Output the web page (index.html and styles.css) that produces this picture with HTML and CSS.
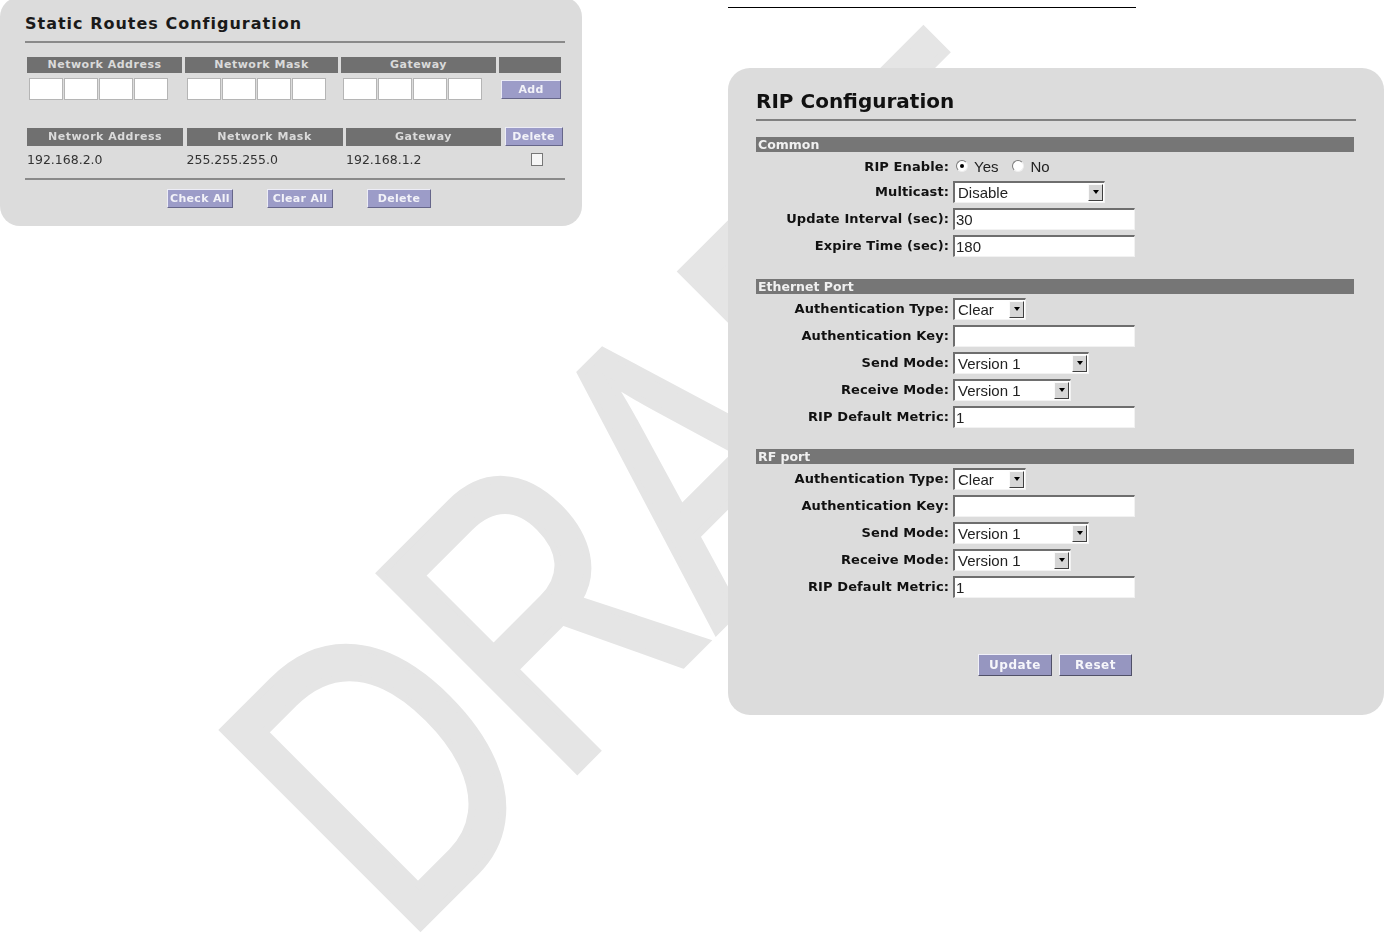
FILE: index.html
```html
<!doctype html>
<html lang="en">
  <head>
    <meta charset="UTF-8" />
    <title>Routing Configuration</title>
    <link rel="stylesheet" href="styles.css">
  </head>
  <body>
    <svg class="watermark" width="1384" height="941" viewBox="0 0 1384 941" aria-hidden="true">
      <text x="0" y="0" transform="translate(402 945) rotate(-45) scale(0.76 1)">DRAFT</text>
    </svg>

    <div class="page">
      <section class="panel routes">
        <h2 class="routes-title">Static Routes Configuration</h2>
        <div class="routes-rule"></div>

        <div class="route-head add-cols">
          <div class="head-cell">Network Address</div>
          <div class="head-cell">Network Mask</div>
          <div class="head-cell">Gateway</div>
          <div class="head-cell"></div>
        </div>
        <div class="route-inputs add-cols">
          <div class="octets">
            <input class="octet" type="text"><input class="octet" type="text"><input class="octet" type="text"><input class="octet" type="text">
          </div>
          <div class="octets">
            <input class="octet" type="text"><input class="octet" type="text"><input class="octet" type="text"><input class="octet" type="text">
          </div>
          <div class="octets">
            <input class="octet" type="text"><input class="octet" type="text"><input class="octet" type="text"><input class="octet" type="text">
          </div>
          <div class="octets">
            <button class="btn-small add-btn">Add</button>
          </div>
        </div>

        <div class="route-head list-cols">
          <div class="head-cell">Network Address</div>
          <div class="head-cell">Network Mask</div>
          <div class="head-cell">Gateway</div>
          <button class="btn-small head-btn">Delete</button>
        </div>
        <div class="route-row list-cols">
          <span>192.168.2.0</span>
          <span>255.255.255.0</span>
          <span>192.168.1.2</span>
          <span class="check-cell"><span class="checkbox"></span></span>
        </div>

        <div class="routes-rule rule-bottom"></div>
        <div class="routes-actions">
          <button class="btn-small act-wide">Check All</button>
          <button class="btn-small act-wide">Clear All</button>
          <button class="btn-small act-narrow">Delete</button>
        </div>
      </section>

      <div class="right-col">
        <div class="top-rule"></div>

        <section class="panel rip">
          <h2 class="rip-title">RIP Configuration</h2>
          <div class="rip-rule"></div>

          <div class="section-bar">Common</div>
          <div class="form-row radio-row">
            <label>RIP Enable:</label>
            <div class="radios">
              <span class="radio on"></span><span class="radio-text">Yes</span>
              <span class="radio second"></span><span class="radio-text">No</span>
            </div>
          </div>
          <div class="form-row">
            <label>Multicast:</label>
            <div class="select w-multicast"><span class="select-text">Disable</span><span class="select-btn"></span></div>
          </div>
          <div class="form-row">
            <label>Update Interval (sec):</label>
            <input class="field" type="text" value="30">
          </div>
          <div class="form-row">
            <label>Expire Time (sec):</label>
            <input class="field" type="text" value="180">
          </div>

          <div class="section-bar bar-gap">Ethernet Port</div>
          <div class="section-rows">
            <div class="form-row">
              <label>Authentication Type:</label>
              <div class="select w-auth"><span class="select-text">Clear</span><span class="select-btn"></span></div>
            </div>
            <div class="form-row">
              <label>Authentication Key:</label>
              <input class="field" type="text" value="">
            </div>
            <div class="form-row">
              <label>Send Mode:</label>
              <div class="select w-send"><span class="select-text">Version 1</span><span class="select-btn"></span></div>
            </div>
            <div class="form-row">
              <label>Receive Mode:</label>
              <div class="select w-receive"><span class="select-text">Version 1</span><span class="select-btn"></span></div>
            </div>
            <div class="form-row">
              <label>RIP Default Metric:</label>
              <input class="field" type="text" value="1">
            </div>
          </div>

          <div class="section-bar bar-gap-rf">RF port</div>
          <div class="section-rows">
            <div class="form-row">
              <label>Authentication Type:</label>
              <div class="select w-auth"><span class="select-text">Clear</span><span class="select-btn"></span></div>
            </div>
            <div class="form-row">
              <label>Authentication Key:</label>
              <input class="field" type="text" value="">
            </div>
            <div class="form-row">
              <label>Send Mode:</label>
              <div class="select w-send"><span class="select-text">Version 1</span><span class="select-btn"></span></div>
            </div>
            <div class="form-row">
              <label>Receive Mode:</label>
              <div class="select w-receive"><span class="select-text">Version 1</span><span class="select-btn"></span></div>
            </div>
            <div class="form-row">
              <label>RIP Default Metric:</label>
              <input class="field" type="text" value="1">
            </div>
          </div>

          <div class="form-actions">
            <button class="btn btn-update">Update</button>
            <button class="btn btn-reset">Reset</button>
          </div>
        </section>
      </div>
    </div>
  </body>
</html>
```

FILE: styles.css
```css
* {
  margin: 0;
  padding: 0;
  box-sizing: border-box;
}

body {
  font-family: "DejaVu Sans", Verdana, sans-serif;
  background-color: #fff;
  color: #111;
  overflow: hidden;
}

.watermark {
  position: fixed;
  top: 0;
  left: 0;
  z-index: -1;
}

.watermark text {
  font-family: "Liberation Sans", Arial, sans-serif;
  font-size: 404px;
  fill: #e5e5e5;
  stroke: #e5e5e5;
  stroke-width: 8;
}

.page {
  display: flex;
  align-items: flex-start;
}

.panel {
  background-color: #dcdcdc;
  border-radius: 20px;
}

/* static routes */

.routes {
  width: 582px;
  margin-top: -3px;
  padding: 17px 17px 18px 25px;
}

.routes-title {
  font-size: 16px;
  line-height: 20px;
  letter-spacing: 1px;
  font-weight: bold;
  color: #1a1a1a;
}

.routes-rule {
  width: 540px;
  border-top: 2px solid #8a8a8a;
  margin-top: 7px;
}

.add-cols {
  display: grid;
  grid-template-columns: 155px 153px 155px 62px;
  column-gap: 3px;
}

.list-cols {
  display: grid;
  grid-template-columns: 156px 156px 155px 58px;
  column-gap: 3.5px;
}

.route-head {
  margin-top: 14px;
  margin-left: 2px;
  height: 16px;
}

.route-head.list-cols {
  margin-top: 28px;
  height: 18px;
}

.head-cell {
  background-color: #707070;
  color: #dadada;
  font-size: 11px;
  font-weight: bold;
  letter-spacing: 0.5px;
  text-align: center;
  line-height: 16px;
}

.list-cols .head-cell {
  line-height: 18px;
}

.route-inputs {
  margin-top: 5px;
  margin-left: 2px;
  height: 22px;
}

.octets {
  display: flex;
  gap: 1px;
  padding-left: 2px;
}

.octet {
  width: 34px;
  height: 22px;
  border: 1px solid #b5b5b5;
  background-color: #fff;
}

.btn-small {
  font-family: "DejaVu Sans", Verdana, sans-serif;
  font-size: 11px;
  font-weight: bold;
  letter-spacing: 0.3px;
  color: #f2f2f8;
  background-color: #9c9cc8;
  border: 1px solid;
  border-color: #ececf6 #66668a #66668a #ececf6;
  height: 19px;
}

.add-btn {
  width: 60px;
  margin-top: 2px;
}

.head-btn {
  height: 19px;
  margin-top: -1px;
}

.route-row {
  margin-left: 2px;
  height: 26px;
  align-items: center;
  font-size: 12.5px;
  color: #333;
}

.check-cell {
  display: flex;
  justify-content: center;
  padding-left: 6px;
}

.checkbox {
  width: 12px;
  height: 13px;
  border: 1px solid #777;
  background-color: #f6f6f6;
}

.rule-bottom {
  margin-top: 6px;
}

.routes-actions {
  display: flex;
  gap: 34px;
  margin-top: 9px;
  padding-left: 142px;
}

.act-wide {
  width: 66px;
}

.act-narrow {
  width: 64px;
}

/* rip */

.right-col {
  margin-left: 146px;
  width: 656px;
}

.top-rule {
  width: 408px;
  border-top: 1px solid #000;
  margin-top: 7px;
}

.rip {
  margin-top: 60px;
  padding: 21px 28px 39px 28px;
  border-radius: 22px;
}

.rip-title {
  font-size: 20px;
  line-height: 24px;
  font-weight: bold;
  color: #111;
}

.rip-rule {
  border-top: 2px solid #808080;
  margin-top: 6px;
}

.section-bar {
  margin-top: 16px;
  width: 598px;
  height: 15px;
  background-color: #767676;
  color: #f0f0f0;
  font-size: 12.5px;
  font-weight: bold;
  line-height: 15px;
  padding-left: 2px;
}

.bar-gap {
  margin-top: 20px;
}

.bar-gap-rf {
  margin-top: 19px;
}

.section-rows {
  padding-top: 1px;
}

.form-row {
  display: grid;
  grid-template-columns: 193px 1fr;
  column-gap: 4px;
  align-items: center;
  height: 27px;
}

.radio-row {
  height: 24px;
  margin-top: 2px;
}

.form-row label {
  text-align: right;
  font-size: 13px;
  font-weight: bold;
  letter-spacing: 0.1px;
  color: #111;
  white-space: nowrap;
}

.field {
  width: 182px;
  height: 22px;
  border-top: 2px solid #6e6e6e;
  border-left: 2px solid #6e6e6e;
  border-right: 1px solid #f2f2f2;
  border-bottom: 1px solid #f2f2f2;
  background-color: #fff;
  font-family: "Liberation Sans", Arial, sans-serif;
  font-size: 15px;
  color: #222;
  padding: 0 1px;
  outline: none;
}

.select {
  display: flex;
  align-items: center;
  height: 22px;
  background-color: #fff;
  border-top: 2px solid #6e6e6e;
  border-left: 2px solid #6e6e6e;
  border-right: 1px solid #f2f2f2;
  border-bottom: 1px solid #f2f2f2;
}

.w-multicast {
  width: 152px;
}

.w-auth {
  width: 73px;
}

.w-send {
  width: 136px;
}

.w-receive {
  width: 118px;
}

.select-text {
  flex: 1;
  padding-left: 3px;
  font-family: "Liberation Sans", Arial, sans-serif;
  font-size: 15px;
  color: #222;
  white-space: nowrap;
}

.select-btn {
  display: flex;
  align-items: center;
  justify-content: center;
  width: 15px;
  height: 17px;
  margin-right: 1px;
  background-color: #d6d6d6;
  border: 1px solid;
  border-color: #fafafa #404040 #404040 #fafafa;
}

.select-btn::after {
  content: "";
  border-left: 3.5px solid transparent;
  border-right: 3.5px solid transparent;
  border-top: 4px solid #000;
}

.radios {
  display: flex;
  align-items: center;
  font-family: "Liberation Sans", Arial, sans-serif;
  font-size: 15px;
  color: #222;
}

.radio {
  display: flex;
  align-items: center;
  justify-content: center;
  width: 12px;
  height: 12px;
  margin-left: 3px;
  border-radius: 50%;
  background-color: #fff;
  border: 1px solid;
  border-color: #7a7a7a #efefef #efefef #7a7a7a;
}

.radio.on::after {
  content: "";
  width: 4px;
  height: 4px;
  border-radius: 50%;
  background-color: #000;
}

.radio.second {
  margin-left: 14px;
}

.radio-text {
  margin-left: 6px;
}

.form-actions {
  display: flex;
  gap: 7px;
  margin-top: 54px;
  padding-left: 222px;
}

.btn {
  height: 22px;
  font-family: "DejaVu Sans", Verdana, sans-serif;
  font-size: 12px;
  font-weight: bold;
  letter-spacing: 0.5px;
  color: #f6f6fa;
  background-color: #9696c0;
  border: 1px solid;
  border-color: #f0f0f8 #505068 #505068 #f0f0f8;
}

.btn-update {
  width: 74px;
}

.btn-reset {
  width: 73px;
}
```
